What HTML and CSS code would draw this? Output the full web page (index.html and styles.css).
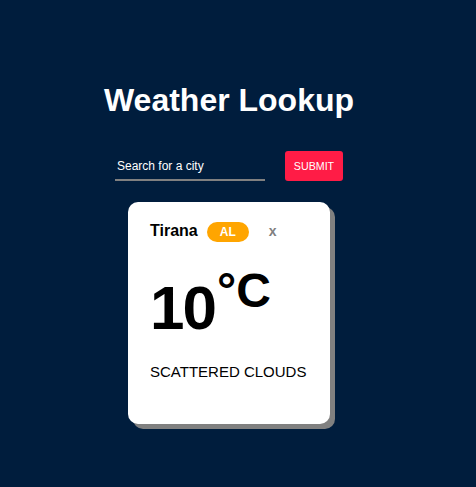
FILE: index.html
```html
<!DOCTYPE html>
<html lang="en">
<head>
<meta charset="utf-8">
<title>Weather Lookup</title>
<link rel="stylesheet" href="styles.css">
</head>
<body>
<main class="app">
  <h1 class="title">Weather Lookup</h1>
  <form class="search">
    <input class="search-input" type="text" placeholder="Search for a city">
    <button class="search-btn" type="button">Submit</button>
  </form>
  <section class="card">
    <div class="card-head">
      <span class="city">Tirana</span>
      <span class="badge">AL</span>
      <span class="close">x</span>
    </div>
    <div class="temp">10<span class="unit">°C</span></div>
    <div class="desc">Scattered Clouds</div>
  </section>
</main>
</body>
</html>
```

FILE: styles.css
```css
* { box-sizing: border-box; }
html, body { margin: 0; padding: 0; }
body {
  background: #001d3d;
  font-family: "Liberation Sans", Arial, sans-serif;
  height: 487px;
}
.app {
  width: 458px;
  display: flex;
  flex-direction: column;
  align-items: center;
  padding-top: 82px;
}
.title {
  margin: 0;
  font-size: 32px;
  line-height: 37px;
  font-weight: bold;
  color: #fff;
}
.search {
  margin-top: 32px;
  display: flex;
  align-items: flex-end;
  gap: 20px;
}
.search-input {
  width: 150px;
  height: 28px;
  padding: 6px 2px;
  font-family: inherit;
  font-size: 12px;
  line-height: 14px;
  color: #fff;
  background: transparent;
  border: none;
  border-bottom: 2px solid #808080;
  outline: none;
}
.search-input::placeholder { color: #fff; opacity: 1; }
.search-btn {
  width: 58px;
  height: 30px;
  border: none;
  border-radius: 3px;
  background: #ff1c46;
  color: #fff;
  font-family: inherit;
  font-size: 10.67px;
  text-transform: uppercase;
  padding: 0;
}
.card {
  margin-top: 21px;
  width: 202px;
  height: 222px;
  background: #fff;
  border-radius: 10px;
  box-shadow: 5px 5px 0 #808080;
  padding: 20px 22px 0;
  color: #000;
}
.card-head {
  display: flex;
  align-items: baseline;
}
.city {
  font-size: 16px;
  font-weight: bold;
}
.badge {
  margin-left: 9px;
  padding: 3px 13px;
  font-size: 12px;
  line-height: 14px;
  font-weight: bold;
  color: #fff;
  background: #ffa500;
  border-radius: 10px;
}
.close {
  margin-left: 20px;
  font-size: 14px;
  font-weight: bold;
  color: #808080;
}
.temp {
  margin-top: 25px;
  font-size: 62px;
  line-height: 62px;
  font-weight: bold;
  letter-spacing: -2px;
}
.unit {
  margin-left: 2px;
  letter-spacing: 0;
  font-size: 48px;
  line-height: 1;
  vertical-align: 22px;
}
.desc {
  margin-top: 24px;
  font-size: 15px;
  text-transform: uppercase;
}
```
